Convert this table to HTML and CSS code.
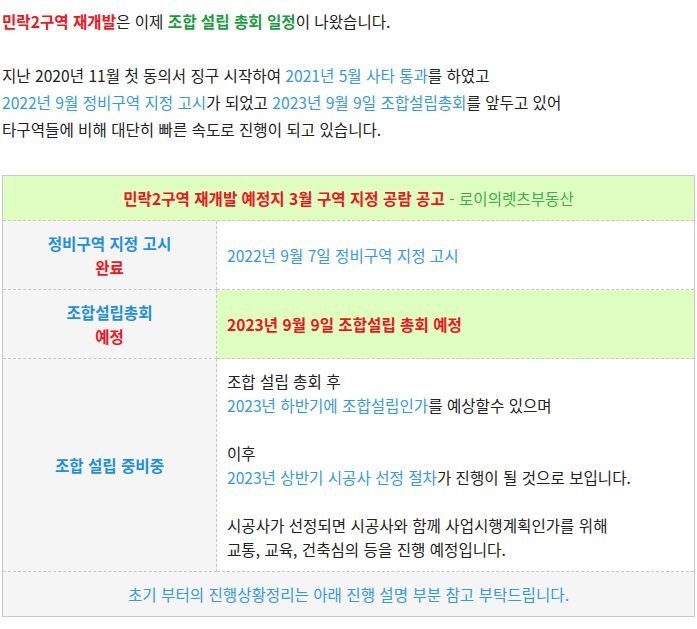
FILE: index.html
```html
<!DOCTYPE html>
<html lang="ko">
<head>
<meta charset="utf-8">
<title>민락2구역 재개발</title>
<link rel="stylesheet" href="styles.css">
</head>
<body>
<div class="intro">
<span class="b red">민락2구역 재개발</span>은 이제 <span class="b green">조합 설립 총회 일정</span>이 나왔습니다.<br><br>
지난 2020년 11월 첫 동의서 징구 시작하여 <span class="blue">2021년 5월 사타 통과</span>를 하였고<br>
<span class="blue">2022년 9월 정비구역 지정 고시</span>가 되었고 <span class="blue">2023년 9월 9일 조합설립총회</span>를 앞두고 있어<br>
타구역들에 비해 대단히 빠른 속도로 진행이 되고 있습니다.
</div>

<div class="board">
  <div class="cell head"><span class="b red">민락2구역 재개발 예정지 3월 구역 지정 공람 공고</span> <span class="lgreen">- 로이의렛츠부동산</span></div>

  <div class="cell label"><div><span class="b sky">정비구역 지정 고시</span><br><span class="b red">완료</span></div></div>
  <div class="cell value"><div><span class="blue">2022년 9월 7일 정비구역 지정 고시</span></div></div>

  <div class="cell label"><div><span class="b sky">조합설립총회</span><br><span class="b red">예정</span></div></div>
  <div class="cell value hl"><div><span class="b red">2023년 9월 9일 조합설립 총회 예정</span></div></div>

  <div class="cell label"><div><span class="b sky">조합 설립 중비중</span></div></div>
  <div class="cell value"><div>조합 설립 총회 후<br>
<span class="blue">2023년 하반기에 조합설립인가</span>를 예상할수 있으며<br><br>
이후<br>
<span class="blue">2023년 상반기 시공사 선정 절차</span>가 진행이 될 것으로 보입니다.<br><br>
시공사가 선정되면 시공사와 함께 사업시행계획인가를 위해<br>
교통, 교육, 건축심의 등을 진행 예정입니다.</div></div>

  <div class="cell foot"><span class="blue">초기 부터의 진행상황정리는 아래 진행 설명 부분 참고 부탁드립니다.</span></div>
</div>
</body>
</html>
```

FILE: styles.css
```css
html, body {
  margin: 0;
  background: #ffffff;
}
body {
  padding: 8px 2px 0 2px;
  font-family: "Noto Sans CJK KR", sans-serif;
  font-size: 15.6px;
  color: #222222;
}
.intro {
  line-height: 27px;
}
.b { font-weight: 700; }
.red { color: #f5121b; }
.green { color: #16a03c; }
.lgreen { color: #3bb04a; }
.blue { color: #3399ee; }
.sky { color: #1c8fe6; }

.board {
  margin-top: 32px;
  width: 691px;
  border: 1px solid #c8c8c8;
  display: grid;
  grid-template-columns: 214px 1fr;
  line-height: 24px;
  font-size: 15.6px;
}
.cell {
  padding: 10px;
  border-bottom: 1px dashed #c8c8c8;
}
.head {
  grid-column: 1 / 3;
  background: #dfffc0;
  text-align: center;
}
.label {
  background: #f5f5f5;
  border-right: 1px dashed #c8c8c8;
  text-align: center;
  display: flex;
  align-items: center;
  justify-content: center;
}
.value {
  display: flex;
  flex-direction: column;
  justify-content: center;
}
.value.hl {
  background: #dfffc0;
}
.foot {
  grid-column: 1 / 3;
  background: #f5f5f5;
  text-align: center;
  border-bottom: none;
}
```
